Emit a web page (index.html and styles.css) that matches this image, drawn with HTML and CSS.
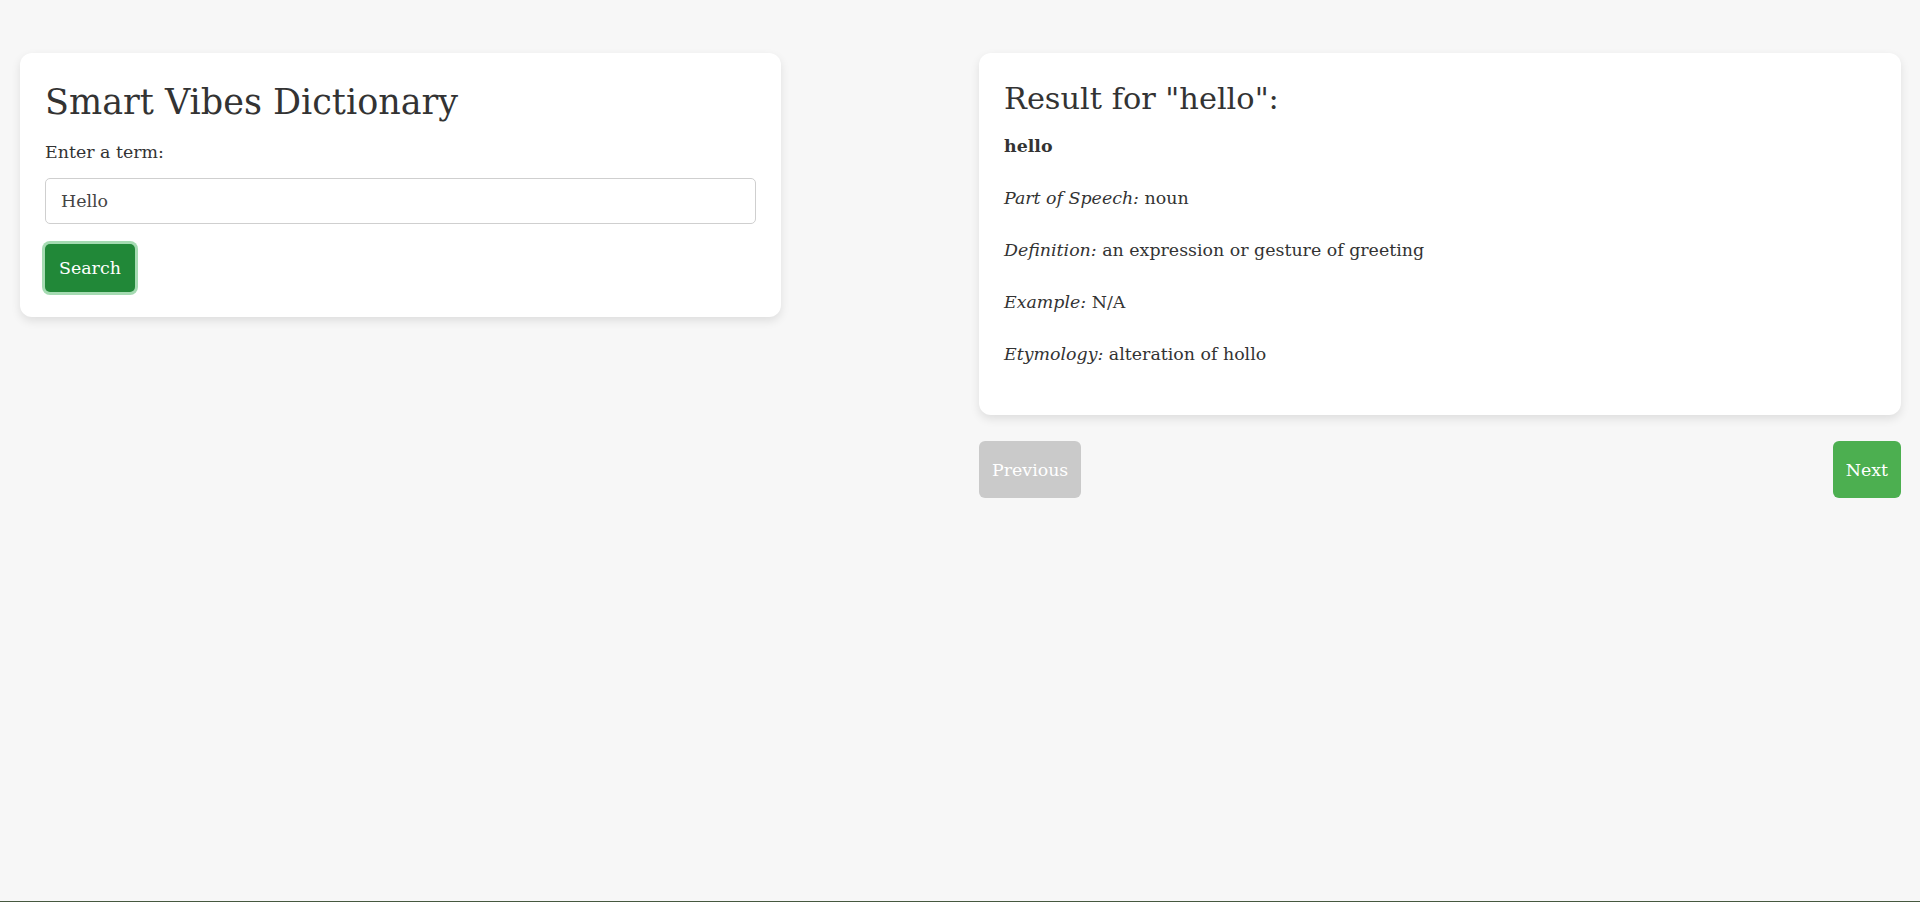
FILE: index.html
```html
<!DOCTYPE html>
<html lang="en">
<head>
<meta charset="utf-8">
<title>Smart Vibes Dictionary</title>
<link rel="stylesheet" href="styles.css">
</head>
<body>
<div class="container">
  <div class="card search-card">
    <h1 class="title">Smart Vibes Dictionary</h1>
    <label class="label" for="term">Enter a term:</label>
    <input class="term-input" id="term" type="text" value="Hello">
    <button class="search-btn">Search</button>
  </div>
  <div class="result-col">
    <div class="card result-card">
      <h2 class="result-title">Result for "hello":</h2>
      <p class="para"><strong>hello</strong></p>
      <p class="para"><em>Part of Speech:</em> noun</p>
      <p class="para"><em>Definition:</em> an expression or gesture of greeting</p>
      <p class="para"><em>Example:</em> N/A</p>
      <p class="para"><em>Etymology:</em> alteration of hollo</p>
    </div>
    <div class="nav">
      <button class="nav-btn prev" disabled>Previous</button>
      <button class="nav-btn next">Next</button>
    </div>
  </div>
</div>
<div class="bottom-edge"></div>
</body>
</html>
```
FILE: styles.css
```css
html, body {
  margin: 0;
  height: 100%;
}
body {
  background: #f7f7f7;
  color: #333;
  font-family: "DejaVu Serif", "Liberation Serif", serif;
  font-size: 17.4px;
  line-height: 32px;
  padding: 53px 19px 0 20px;
  box-sizing: border-box;
}
.container {
  display: flex;
  justify-content: space-between;
  align-items: flex-start;
}
.card {
  background: #fff;
  border-radius: 12px;
  box-shadow: 0 4px 10px rgba(0, 0, 0, 0.1);
  padding: 25px;
  box-sizing: border-box;
}
.search-card {
  width: 761px;
}
.title {
  margin: 0 0 10px;
  font-size: 35px;
  line-height: 48px;
  font-weight: normal;
}
.label {
  display: block;
}
.term-input {
  display: block;
  margin-top: 10px;
  width: 100%;
  height: 46px;
  box-sizing: border-box;
  border: 1px solid #cfcfcf;
  border-radius: 5px;
  padding: 0 15px;
  font-family: inherit;
  font-size: 17.4px;
  color: #444;
  background: #fff;
}
.search-btn {
  display: block;
  margin-top: 20px;
  height: 48px;
  padding: 0 14px;
  border: none;
  border-radius: 5px;
  background: #218838;
  color: #fff;
  font-family: inherit;
  font-size: 17.4px;
  box-shadow: 0 0 0 3px #a5dbb2;
}
.result-col {
  width: 922px;
}
.result-card {
  margin-bottom: 26px;
}
.result-title {
  margin: 0 0 10px;
  font-size: 30.4px;
  line-height: 42px;
  font-weight: normal;
}
.para {
  margin: 0 0 20px;
}
.nav {
  display: flex;
  justify-content: space-between;
}
.nav-btn {
  height: 57px;
  padding: 0 13px;
  border: none;
  border-radius: 6px;
  color: #fff;
  font-family: inherit;
  font-size: 17.4px;
}
.prev {
  background: #cacaca;
}
.next {
  background: #4caf50;
}
.bottom-edge {
  position: fixed;
  left: 0;
  right: 0;
  bottom: 0;
  height: 1px;
  background: #46583f;
}
```
